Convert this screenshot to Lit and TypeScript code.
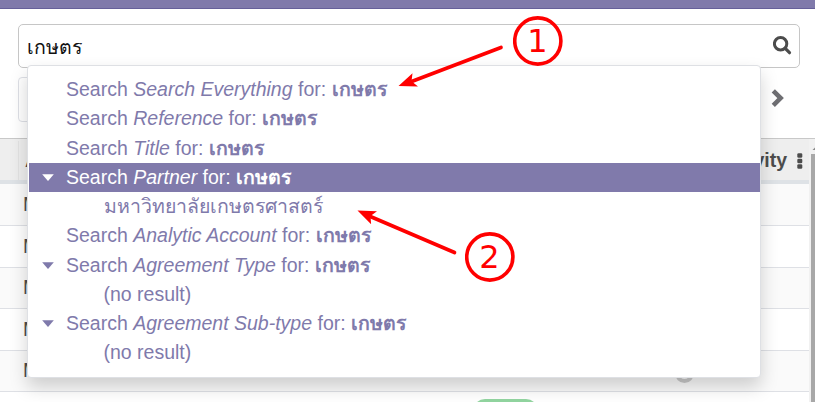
import { LitElement, html, css, svg } from "lit";
import { customElement, property } from "lit/decorators.js";
import { classMap } from "lit/directives/class-map.js";

interface MenuItem {
  field?: string;
  child?: string;
  caret?: boolean;
  active?: boolean;
}

const QUERY = "เกษตร";

const ITEMS: MenuItem[] = [
  { field: "Search Everything" },
  { field: "Reference" },
  { field: "Title" },
  { field: "Partner", caret: true, active: true },
  { child: "มหาวิทยาลัยเกษตรศาสตร์" },
  { field: "Analytic Account" },
  { field: "Agreement Type", caret: true },
  { child: "(no result)" },
  { field: "Agreement Sub-type", caret: true },
  { child: "(no result)" },
];

@customElement("search-menu")
class SearchMenu extends LitElement {
  static styles = css`
    :host {
      display: block;
      box-sizing: border-box;
      padding: 9.05px 0 9px 1px;
      background: #fff;
      border: 1px solid #dee0e4;
      border-radius: 4px;
      box-shadow: 0 9px 18px rgba(0, 0, 0, 0.175);
      color: #7f7aab;
    }
    .item {
      display: flex;
      align-items: center;
      height: 29.25px;
      white-space: pre;
    }
    .gutter {
      flex: none;
      width: 37px;
      display: flex;
      justify-content: center;
      align-items: center;
    }
    .caret {
      display: block;
      width: 12px;
      height: 7px;
      fill: currentColor;
    }
    .child {
      padding-left: 37.5px;
    }
    .active {
      background: #807aab;
      color: #fff;
    }
  `;

  render() {
    return html`${ITEMS.map(
      (item) => html`<div class=${classMap({ item: true, active: !!item.active })}>
        <span class="gutter">${item.caret
          ? html`<svg class="caret" viewBox="0 0 12 7"><path d="M.2.2h11.6L6.5 6.6q-.5.4-1 0z" /></svg>`
          : ""}</span>${item.child
          ? html`<span class="child">${item.child}</span>`
          : html`<span>Search <em>${item.field}</em> for: <strong>${QUERY}</strong></span>`}
      </div>`
    )}`;
  }
}

@customElement("record-table")
class RecordTable extends LitElement {
  static styles = css`
    :host {
      display: flex;
      flex: 1;
      min-height: 0;
      color: #4c4c4c;
      overflow: hidden;
    }
    .grid {
      flex: 1;
    }
    .head {
      display: flex;
      align-items: center;
      box-sizing: border-box;
      height: 45px;
      padding-top: 2px;
      background: #eee;
      border-bottom: 4px solid #dee2e6;
      font-weight: bold;
    }
    .check {
      flex: none;
      box-sizing: border-box;
      width: 19px;
      align-self: stretch;
      border-right: 1px solid #e3e3e3;
    }
    .name {
      flex: 1;
      padding-left: 6px;
    }
    .dots {
      width: 6px;
      height: 16px;
      margin: 0 6px 0 10px;
      fill: #4c4c4c;
    }
    .row {
      display: flex;
      align-items: center;
      box-sizing: border-box;
      height: 41.4px;
      padding: 0 115px 0 23px;
      background: #fff;
    }
    .row + .row {
      border-top: 1px solid #dee0e5;
    }
    .row:nth-child(even) {
      background: #fafafa;
    }
    .code {
      flex: 1;
    }
    .clock {
      width: 19px;
      height: 19px;
      box-sizing: border-box;
      border: 4px solid #c9c9c9;
      border-radius: 50%;
      margin-top: 6px;
    }
    .row.last {
      padding-left: 473px;
      align-items: flex-start;
      background: #fff;
    }
    .pill {
      margin-top: 7px;
      width: 65px;
      height: 24px;
      border-radius: 12px;
      background: #92d5a0;
    }
    .track {
      box-sizing: border-box;
      width: 6px;
      height: 263px;
      display: flex;
      flex-direction: column;
      padding: 8px 0 0 2px;
      background: #f1f1f1;
    }
    .up {
      flex: none;
      width: 4px;
      height: 3px;
      margin-bottom: 4px;
      fill: #8a8a8a;
    }
    .thumb {
      flex: 1;
      background: #a8a8a8;
    }
  `;

  render() {
    return html`
      <div class="grid">
        <div class="head">
          <span class="check"></span><span class="name">A</span><span>Activity</span>
          <svg class="dots" viewBox="0 0 6 16">
            ${[0.2, 5.7, 11.2].map((y) => svg`<rect x=".3" y=${y} width="5" height="4.6" rx="1.3" />`)}
          </svg>
        </div>
        ${[0, 1, 2, 3, 4].map(
          (i) => html`<div class="row"><span class="code">M</span>${i === 4 ? html`<span class="clock"></span>` : ""}</div>`
        )}
        <div class="row last"><span class="pill"></span></div>
      </div>
      <div class="track">
        <svg class="up" viewBox="0 0 4 3"><path d="M1.500 3l2.500-2.500V3z" /></svg>
        <div class="thumb"></div>
      </div>
    `;
  }
}

@customElement("callout-mark")
class CalloutMark extends LitElement {
  @property() label = "";
  static styles = css`
    :host {
      display: block;
      width: 50px;
      height: 50px;
    }
    .mark {
      display: block;
      width: 50px;
      height: 50px;
    }
    .ring {
      fill: none;
      stroke: #f00;
      stroke-width: 3.6;
    }
    .digit {
      fill: #f00;
      font: 32px "DejaVu Sans", sans-serif;
      text-anchor: middle;
    }
  `;
  render() {
    return html`<svg class="mark" viewBox="0 0 50 50">
      <circle class="ring" cx="24.8" cy="25" r="23.1" />
      <text class="digit" x="24.500" y="35.500">${this.label}</text>
    </svg>`;
  }
}

@customElement("app-root")
class AppRoot extends LitElement {
  static styles = css`
    :host {
      display: flex;
      flex-direction: column;
      position: relative;
      box-sizing: border-box;
      height: 402px;
      overflow: hidden;
      background: #fff;
      font: 19.5px/29.25px "Liberation Sans", Arial, sans-serif;
    }
    .topbar {
      flex: none;
      box-sizing: border-box;
      height: 9px;
      background: #807aab;
      border-bottom: 1px solid #66609a;
    }
    .panel {
      flex: none;
      box-sizing: border-box;
      height: 130px;
      padding: 15px 15px 0 18px;
      border-bottom: 1px solid #c8c8c8;
    }
    .search {
      display: flex;
      align-items: center;
      justify-content: space-between;
      box-sizing: border-box;
      height: 44px;
      padding: 3px 7px 0 8px;
      border: 1px solid #c6c6c6;
      border-radius: 5px;
      color: #111;
    }
    .glass {
      width: 19px;
      height: 19px;
      margin-top: -5px;
      fill: none;
      stroke: #4c4c4c;
    }
    .actions {
      display: flex;
      justify-content: space-between;
      align-items: center;
      margin-top: 9px;
      height: 45px;
      padding-right: 15px;
    }
    .button {
      box-sizing: border-box;
      width: 100px;
      height: 45px;
      border: 1px solid #dee0e6;
      border-radius: 4px;
      background: #fff;
    }
    .next {
      width: 14px;
      height: 20px;
      margin-top: -3px;
      fill: none;
      stroke: #6e6e72;
      stroke-width: 4.6;
    }
    .menu {
      position: absolute;
      left: 27px;
      top: 65px;
      width: 734px;
      height: 313px;
    }
    .arrows {
      position: absolute;
      left: 0;
      top: 0;
      width: 815px;
      height: 402px;
      fill: #f00;
    }
    .shaft {
      stroke: #f00;
      stroke-width: 3.7;
      stroke-linecap: round;
    }
    .mark {
      position: absolute;
    }
    .one {
      left: 513px;
      top: 16px;
    }
    .two {
      left: 465px;
      top: 232px;
    }
  `;

  render() {
    return html`
      <div class="topbar"></div>
      <div class="panel">
        <div class="search">
          <span>${QUERY}</span>
          <svg class="glass" viewBox="0 0 19 19">
            <circle cx="7.6" cy="7.8" r="6.2" stroke-width="3" />
            <path d="M12.2 12.4l4.3 4.300" stroke-width="3.2" stroke-linecap="round" />
          </svg>
        </div>
        <div class="actions">
          <span class="button"></span>
          <svg class="next" viewBox="0 0 14 20"><path d="M2.300 2.900l7.300 7.200-7.300 7.200" /></svg>
        </div>
      </div>
      <record-table></record-table>
      <search-menu class="menu"></search-menu>
      <svg class="arrows" viewBox="0 0 815 402">
        <path class="shaft" d="M501 47.500L409 82.500M454.500 252.500L368 215.500" />
        <path d="M398.500 86l14-12.700-1 8 6.500 5.200zM357.500 210.500l19.500.7-6.500 4.800.6 8.200z" />
      </svg>
      <callout-mark class="mark one" label="1"></callout-mark>
      <callout-mark class="mark two" label="2"></callout-mark>
    `;
  }
}
